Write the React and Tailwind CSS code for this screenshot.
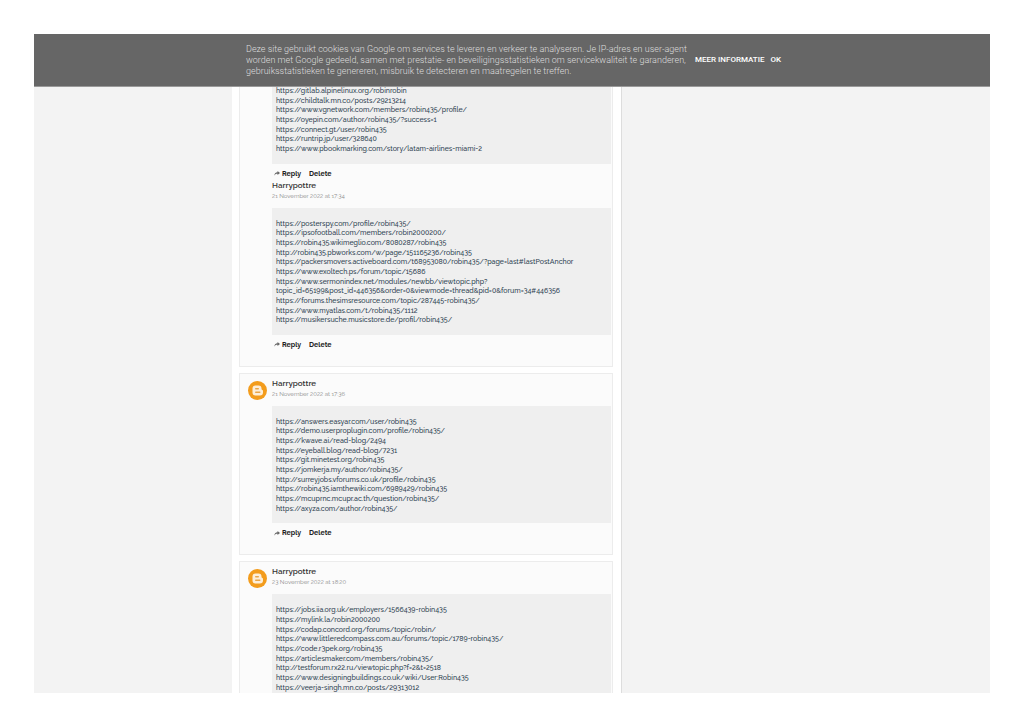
const threads = [
  {
    avatar: false,
    comments: [
      {
        actions: true,
        links: [
          "https://gitlab.alpinelinux.org/robinrobin",
          "https://childtalk.mn.co/posts/29213214",
          "https://www.vgnetwork.com/members/robin435/profile/",
          "https://oyepin.com/author/robin435/?success=1",
          "https://connect.gt/user/robin435",
          "https://runtrip.jp/user/328640",
          "https://www.pbookmarking.com/story/latam-airlines-miami-2",
        ],
      },
      {
        author: "Harrypottre",
        date: "21 November 2022 at 17:34",
        actions: true,
        links: [
          "https://posterspy.com/profile/robin435/",
          "https://ipsofootball.com/members/robin2000200/",
          "https://robin435.wikimeglio.com/8080287/robin435",
          "http://robin435.pbworks.com/w/page/151165236/robin435",
          "https://packersmovers.activeboard.com/t68953080/robin435/?page=last#lastPostAnchor",
          "https://www.exoltech.ps/forum/topic/15686",
          "https://www.sermonindex.net/modules/newbb/viewtopic.php?\ntopic_id=65199&post_id=446356&order=0&viewmode=thread&pid=0&forum=34#446356",
          "https://forums.thesimsresource.com/topic/287445-robin435/",
          "https://www.myatlas.com/t/robin435/1112",
          "https://musikersuche.musicstore.de/profil/robin435/",
        ],
      },
    ],
  },
  {
    avatar: true,
    comments: [
      {
        author: "Harrypottre",
        date: "21 November 2022 at 17:36",
        actions: true,
        links: [
          "https://answers.easyar.com/user/robin435",
          "https://demo.userproplugin.com/profile/robin435/",
          "https://kwave.ai/read-blog/2494",
          "https://eyeball.blog/read-blog/7231",
          "https://git.minetest.org/robin435",
          "https://jomkerja.my/author/robin435/",
          "http://surreyjobs.vforums.co.uk/profile/robin435",
          "https://robin435.iamthewiki.com/6989429/robin435",
          "https://mcuprnc.mcupr.ac.th/question/robin435/",
          "https://axyza.com/author/robin435/",
        ],
      },
    ],
  },
  {
    avatar: true,
    comments: [
      {
        author: "Harrypottre",
        date: "23 November 2022 at 18:20",
        actions: false,
        links: [
          "https://jobs.iia.org.uk/employers/1566439-robin435",
          "https://mylink.la/robin2000200",
          "https://codap.concord.org/forums/topic/robin/",
          "https://www.littleredcompass.com.au/forums/topic/1789-robin435/",
          "https://code.r3pek.org/robin435",
          "https://articlesmaker.com/members/robin435/",
          "http://testforum.rx22.ru/viewtopic.php?f=2&t=2518",
          "https://www.designingbuildings.co.uk/wiki/User:Robin435",
          "https://veerja-singh.mn.co/posts/29313012",
        ],
      },
    ],
  },
];

function BloggerAvatar() {
  return (
    <svg viewBox="0 0 38 38" className="size-[19px]" role="img" aria-label="Blogger">
      <circle cx="19" cy="19" r="19" fill="#f39c1c" />
      <path
        fill="#fdeed8"
        d="M15 9h6a6 6 0 0 1 6 6v1.200c0 1 .6 1.600 1.500 1.600.9 0 1.500.6 1.500 1.500V23a6 6 0 0 1-6 6h-9a6 6 0 0 1-6-6v-8a6 6 0 0 1 6-6z"
      />
      <path stroke="#e9a548" strokeWidth="3" strokeLinecap="round" d="M15.500 15.500h5M15.500 22.500h8" />
    </svg>
  );
}

function ReplyArrow() {
  return (
    <svg viewBox="0 0 12 10" className="h-[5px] w-[6px]" fill="#666" aria-hidden="true">
      <path d="M7 0l5 4-5 4V5.500C4 5.300 2 6.500 .5 9.500 .5 5.500 3 2.600 7 2.400z" />
    </svg>
  );
}

function Comment({ author, date, links, actions }) {
  return (
    <article>
      {author && (
        <header className="mb-[7px]">
          <h3 className="text-[8px] leading-[11px] font-semibold text-[#333]">{author}</h3>
          <p className="text-[6px] leading-[10px] text-[#888]">{date}</p>
        </header>
      )}
      <div className="bg-[#efefef] px-1 pt-[11px] pb-[10px] text-[7px] leading-[1.38] font-medium text-[#2c3e50]">
        {links.map((link) => (
          <p key={link} className="whitespace-pre-line">{link}</p>
        ))}
      </div>
      {actions && (
        <div className="mt-[5px] flex items-center pl-[2px] text-[7px] leading-[10px] font-bold text-[#222]">
          <a href="#reply" className="flex items-center gap-[2px]">
            <ReplyArrow />
            Reply
          </a>
          <a href="#delete" className="ml-2">Delete</a>
        </div>
      )}
    </article>
  );
}

export default function App() {
  return (
    <div className="h-screen bg-white p-[34px] font-['Raleway','Lato',sans-serif]">
      <div className="relative h-full overflow-hidden bg-[#f3f3f3]">
        <div className="absolute inset-x-0 top-0 z-10 flex h-[53px] items-center border-b border-[#999] bg-[#666] pl-[212px] font-['Roboto',sans-serif]">
          <p className="w-[440px] shrink-0 text-[9px] leading-[11px] font-light whitespace-nowrap text-[#ddd]">
            Deze site gebruikt cookies van Google om services te leveren en verkeer te analyseren. Je IP-adres en user-agent
            <br />
            worden met Google gedeeld, samen met prestatie- en beveiligingsstatistieken om servicekwaliteit te garanderen,
            <br />
            gebruiksstatistieken te genereren, misbruik te detecteren en maatregelen te treffen.
          </p>
          <div className="ml-[9px] flex gap-[6px] text-[8px] font-medium text-white">
            <a href="#info">MEER INFORMATIE</a>
            <a href="#ok">OK</a>
          </div>
        </div>
        <main className="ml-[198px] flex min-h-full w-[390px] flex-col gap-[6px] border-r border-[#ddd] bg-white pt-[36px] pr-2 pl-[7px]">
          {threads.map((thread, i) => (
            <section key={i} className="flex border border-[#ececec] bg-[#fbfbfb] pt-1 pr-px pb-4">
              <div className="w-8 shrink-0 pt-[3px] pl-2">{thread.avatar && <BloggerAvatar />}</div>
              <div className="min-w-0 grow space-y-px">
                {thread.comments.map((comment, j) => (
                  <Comment key={j} {...comment} />
                ))}
              </div>
            </section>
          ))}
        </main>
      </div>
    </div>
  );
}
